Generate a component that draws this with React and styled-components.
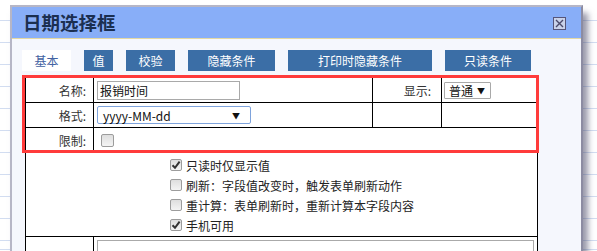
import React from "react";
import styled, { createGlobalStyle } from "styled-components";

const GlobalStyle = createGlobalStyle`
  html, body { margin: 0; padding: 0; overflow: hidden; }
  body {
    font-family: "Noto Sans CJK SC", "Noto Sans", sans-serif;
    background-color: #ffffff;
    background-image: repeating-linear-gradient(to bottom, #d2ddf1 0px, #d2ddf1 1px, transparent 1px, transparent 22px);
    background-position: 0 -2px;
  }
`;

const Page = styled.div`
  padding: 5px 0 0 10px;
  height: 251px;
  box-sizing: border-box;
`;

const Dialog = styled.div`
  width: 573px;
  height: 246px;
  overflow: hidden;
  box-sizing: border-box;
  border: 2px solid #b6b6c6;
  border-right-color: #8c8ca2;
  border-bottom: none;
  background: #f5f7fd;
  box-shadow: 5px 8px 6px rgba(70, 70, 100, 0.55);
  display: flex;
  flex-direction: column;
`;

const TitleBar = styled.div`
  height: 31px;
  flex: none;
  background: #88aef8;
  border-bottom: 1px solid #e4d8a2;
  display: flex;
  align-items: center;
  justify-content: space-between;
  padding: 0 15px 0 11px;
`;

const Title = styled.h1`
  margin: 0;
  font-size: 18.5px;
  font-weight: 700;
  color: #1b2f50;
  line-height: 1;
`;

const CloseButton = styled.span`
  width: 13px;
  height: 13px;
  box-sizing: border-box;
  border: 1px solid #55557a;
  background: #c9d2ea;
  display: flex;
  align-items: center;
  justify-content: center;
  margin-top: 1px;
`;

const Body = styled.div`
  padding: 11px 0 0 10px;
`;

const Tabs = styled.div`
  display: flex;
  gap: 13px;
  height: 21px;
`;

const Tab = styled.div`
  width: ${(p) => p.$w}px;
  height: 21px;
  display: flex;
  align-items: center;
  justify-content: center;
  font-size: 12px;
  background: ${(p) => (p.$active ? "#ffffff" : "#3b6ea6")};
  color: ${(p) => (p.$active ? "#4262a2" : "#ffffff")};
`;

const FormWrap = styled.div`
  position: relative;
  margin: 6px 0 0 3px;
  width: 513px;
`;

const Highlight = styled.div`
  position: absolute;
  left: -3px;
  top: -2px;
  width: 517px;
  height: 78px;
  box-sizing: border-box;
  border: 3px solid #ff3b3b;
  pointer-events: none;
`;

const Grid = styled.div`
  display: grid;
  grid-template-columns: 67px 278px 68px 95px;
  grid-template-rows: 24px 24px 24px 83px 14px;
  gap: 1px;
  border: 1px solid #000;
  border-bottom: none;
  background: #000;
`;

const Cell = styled.div`
  background: #ffffff;
  display: flex;
  align-items: ${(p) => (p.$top ? "flex-start" : "center")};
  justify-content: ${(p) => (p.$right ? "flex-end" : "flex-start")};
  padding: ${(p) => p.$pad || "0"};
  grid-column: ${(p) => (p.$span ? `span ${p.$span}` : "auto")};
  font-size: 12px;
  color: #333;
  min-width: 0;
  overflow: hidden;
  box-sizing: border-box;
`;

const TextInput = styled.div`
  width: 143px;
  height: 19px;
  box-sizing: border-box;
  border: 1px solid #a9a9a9;
  background: #fff;
  font-size: 12px;
  color: #111;
  line-height: 17px;
  padding-left: 2px;
`;

const Select = styled.div`
  width: ${(p) => p.$w}px;
  height: ${(p) => p.$h}px;
  box-sizing: border-box;
  border: 1px solid ${(p) => (p.$focus ? "#7ea3dc" : "#a9a9a9")};
  border-radius: ${(p) => (p.$focus ? "2px" : "1px")};
  background: #fff;
  display: flex;
  align-items: center;
  justify-content: space-between;
  padding: 0 ${(p) => p.$pr}px 0 ${(p) => p.$pl}px;
  font-size: 12px;
  color: #111;
  white-space: nowrap;
`;

const Arrow = styled.span`
  font-size: 8px;
  color: #111;
`;

const CheckList = styled.div`
  display: flex;
  flex-direction: column;
  padding: 2px 0 0 144px;
`;

const CheckRow = styled.div`
  display: flex;
  align-items: center;
  gap: 4px;
  height: 20px;
  font-size: 12px;
  color: #222;
  white-space: nowrap;
`;

const Box = styled.span`
  width: 12px;
  height: 12px;
  box-sizing: border-box;
  border: 1px solid #9c9c9c;
  border-radius: 2px;
  background: linear-gradient(#dedede, #f4f4f4);
  display: flex;
  align-items: center;
  justify-content: center;
  flex: none;
`;

const BigBox = styled(Box)`
  width: 13px;
  height: 13px;
`;

const TextArea = styled.div`
  width: 437px;
  height: 20px;
  box-sizing: border-box;
  border: 1px solid #aaaaaa;
  border-bottom: none;
  background: #fff;
`;

const Check = ({ on }) => (
  <Box>
    {on && (
      <svg width="10" height="10" viewBox="0 0 10 10">
        <path d="M1.5 5.2 L4 7.8 L8.6 1.6" fill="none" stroke="#333" strokeWidth="2" />
      </svg>
    )}
  </Box>
);

const tabs = [
  { t: "值", w: 29 },
  { t: "校验", w: 49 },
  { t: "隐藏条件", w: 87 },
  { t: "打印时隐藏条件", w: 144 },
  { t: "只读条件", w: 86 },
];

const options = [
  { t: "只读时仅显示值", on: true },
  { t: "刷新：字段值改变时，触发表单刷新动作", on: false },
  { t: "重计算：表单刷新时，重新计算本字段内容", on: false },
  { t: "手机可用", on: true },
];

export default function App() {
  return (
    <>
      <GlobalStyle />
      <Page>
        <Dialog>
          <TitleBar>
            <Title>日期选择框</Title>
            <CloseButton>
              <svg width="9" height="9" viewBox="0 0 9 9">
                <path d="M1 1 L8 8 M8 1 L1 8" stroke="#4a4a6c" strokeWidth="1.4" />
              </svg>
            </CloseButton>
          </TitleBar>
          <Body>
            <Tabs>
              <Tab $active $w={49}>基本</Tab>
              {tabs.map((x) => (
                <Tab key={x.t} $w={x.w}>{x.t}</Tab>
              ))}
            </Tabs>
            <FormWrap>
              <Grid>
                <Cell $right $pad="0 7px 0 0">名称:</Cell>
                <Cell $pad="0 0 0 3px"><TextInput>报销时间</TextInput></Cell>
                <Cell $right $pad="0 10px 0 0">显示:</Cell>
                <Cell $pad="0 0 0 2px">
                  <Select $w={47} $h={17} $pl={4} $pr={5}>普通<Arrow>▼</Arrow></Select>
                </Cell>

                <Cell $right $pad="0 7px 0 0">格式:</Cell>
                <Cell $pad="0 0 0 3px">
                  <Select $focus $w={154} $h={18} $pl={5} $pr={10}>yyyy-MM-dd<Arrow>▼</Arrow></Select>
                </Cell>
                <Cell />
                <Cell />

                <Cell $right $pad="0 7px 0 0">限制:</Cell>
                <Cell $span={3} $pad="0 0 0 7px"><BigBox /></Cell>

                <Cell $span={4} $top>
                  <CheckList>
                    {options.map((o) => (
                      <CheckRow key={o.t}>
                        <Check on={o.on} />
                        {o.t}
                      </CheckRow>
                    ))}
                  </CheckList>
                </Cell>

                <Cell />
                <Cell $span={3} $top $pad="3px 0 0 3px"><TextArea /></Cell>
              </Grid>
              <Highlight />
            </FormWrap>
          </Body>
        </Dialog>
      </Page>
    </>
  );
}
